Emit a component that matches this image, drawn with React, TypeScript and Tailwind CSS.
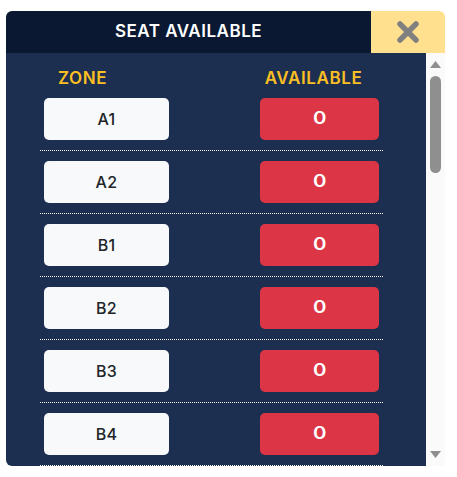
import React from "react";

const zones = ["A1", "A2", "B1", "B2", "B3", "B4"];

function CloseIcon() {
  return (
    <svg width="24" height="24" viewBox="0 0 24 24" aria-hidden="true">
      <path d="M4 4 L20 20 M20 4 L4 20" stroke="#808080" strokeWidth="5.5" strokeLinecap="round" fill="none" />
    </svg>
  );
}

function ScrollTrack() {
  return (
    <div className="relative w-[19px] h-full bg-[#fafafa]">
      {/* up arrow */}
      <svg className="absolute left-[4px] top-[8px]" width="11" height="7" viewBox="0 0 11 7">
        <path d="M5.5 0 L11 7 L0 7 Z" fill="#8f8f8f" />
      </svg>
      {/* thumb */}
      <div className="absolute left-[4px] top-[23px] w-[11px] h-[97px] rounded-full bg-[#8f8f8f]" />
      {/* down arrow */}
      <svg className="absolute left-[4px] top-[398px]" width="11" height="7" viewBox="0 0 11 7">
        <path d="M0 0 L11 0 L5.5 7 Z" fill="#8f8f8f" />
      </svg>
    </div>
  );
}

export default function App() {
  return (
    <div className="w-[457px] h-[477px] bg-white pl-[6px] pt-[11px]" style={{ fontFamily: "Inter, 'Noto Sans', sans-serif" }}>
      <div className="w-[439px] flex flex-col">
        <div className="flex h-[42px]">
          <div className="w-[365px] bg-[#0a1931] rounded-tl-[6px] flex items-center justify-center text-white text-[17px] font-semibold tracking-[0.5px]">
            SEAT AVAILABLE
          </div>
          <div className="w-[74px] bg-[#ffe08e] rounded-tr-[6px] flex items-center justify-center">
            <CloseIcon />
          </div>
        </div>
        <div className="flex h-[413px]">
          <div className="w-[420px] h-full bg-[#1c2f50] rounded-bl-[6px] overflow-hidden">
            <div className="flex pt-[15px] h-[35px] text-[#fbbf24] text-[17px] font-semibold leading-[20px] tracking-[0.6px]">
              <div className="ml-[36px] w-[81px] text-center">ZONE</div>
              <div className="ml-[135px] w-[111px] text-center">AVAILABLE</div>
            </div>
            <div className="mt-[10px] ml-[34px] w-[343px] flex flex-col">
              {zones.map((z) => (
                <div key={z} className="flex flex-col">
                  <div className="flex px-[4px] justify-between">
                    <div className="w-[125px] h-[42px] rounded-[5px] bg-[#f8f9fa] flex items-center justify-center text-[#212529] text-[16px] font-medium tracking-[0.3px]">
                      {z}
                    </div>
                    <div className="w-[119px] h-[42px] rounded-[5px] bg-[#dc3545] flex items-center justify-center text-white text-[17px] font-semibold">
                      <span className="inline-block scale-x-[1.2]">0</span>
                    </div>
                  </div>
                  <div className="mt-[10px] mb-[10px] border-t border-dotted border-white" />
                </div>
              ))}
            </div>
          </div>
          <ScrollTrack />
        </div>
      </div>
    </div>
  );
}
